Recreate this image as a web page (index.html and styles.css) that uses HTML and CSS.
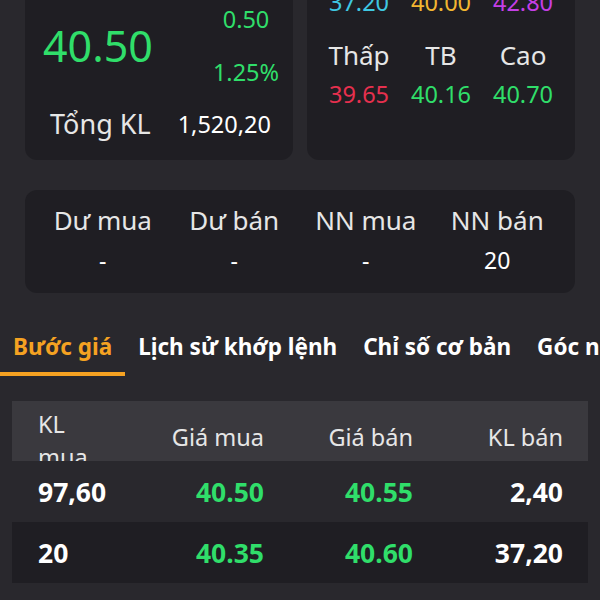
FILE: index.html
```html
<!DOCTYPE html>
<html lang="vi">
<head>
    <meta charset="UTF-8">
    <meta name="viewport" content="width=device-width, initial-scale=1.0">
    <title>Chi tiết cổ phiếu</title>
    <link rel="stylesheet" href="styles.css">
</head>
<body>
    <div class="summary">
        <section class="card quote-card">
            <div class="stock-head">
                <span class="stock-code">GEX</span>
                <span class="stock-ex">HOSE</span>
            </div>
            <div class="quote">
                <div class="price up">40.50</div>
                <div class="change up">
                    <span>0.50</span>
                    <span>1.25%</span>
                </div>
            </div>
            <div class="total">
                <span class="total-label">Tổng KL</span>
                <span class="total-value">1,520,20</span>
            </div>
        </section>

        <section class="card range-card">
            <div class="range-group">
                <span class="range-label">Sàn</span>
                <span class="range-label">TC</span>
                <span class="range-label">Trần</span>
                <span class="range-value floor">37.20</span>
                <span class="range-value ref">40.00</span>
                <span class="range-value ceil">42.80</span>
            </div>
            <div class="range-group">
                <span class="range-label">Thấp</span>
                <span class="range-label">TB</span>
                <span class="range-label">Cao</span>
                <span class="range-value down">39.65</span>
                <span class="range-value up">40.16</span>
                <span class="range-value up">40.70</span>
            </div>
        </section>
    </div>

    <section class="card foreign">
        <span class="foreign-label">Dư mua</span>
        <span class="foreign-label">Dư bán</span>
        <span class="foreign-label">NN mua</span>
        <span class="foreign-label">NN bán</span>
        <span class="foreign-value">-</span>
        <span class="foreign-value">-</span>
        <span class="foreign-value">-</span>
        <span class="foreign-value">20</span>
    </section>

    <nav class="tabs">
        <a href="#" class="tab active">Bước giá</a>
        <a href="#" class="tab">Lịch sử khớp lệnh</a>
        <a href="#" class="tab">Chỉ số cơ bản</a>
        <a href="#" class="tab">Góc nhìn chuyên gia</a>
    </nav>

    <div class="book">
        <div class="book-head">
            <span class="col-first"><span class="wrap">KL mua</span></span>
            <span>Giá mua</span>
            <span>Giá bán</span>
            <span>KL bán</span>
        </div>
        <div class="book-row">
            <span>97,60</span>
            <span class="up">40.50</span>
            <span class="up">40.55</span>
            <span>2,40</span>
        </div>
        <div class="book-row">
            <span>20</span>
            <span class="up">40.35</span>
            <span class="up">40.60</span>
            <span>37,20</span>
        </div>
    </div>
</body>
</html>
```

FILE: styles.css
```css
body {
    margin: 0;
    background: #29282d;
    color: #e6e6e6;
    font-family: 'Noto Sans', 'Open Sans', sans-serif;
    overflow: hidden;
}

.up { color: #30de6a; }
.down { color: #e6304e; }
.floor { color: #3fc8e2; }
.ref { color: #f2b631; }
.ceil { color: #c43fe6; }

.card {
    background: #1f1e23;
    border-radius: 12px;
}

.summary {
    display: grid;
    grid-template-columns: 1fr 1fr;
    gap: 14px;
    padding: 0 25px;
    margin-top: -75px;
}

/* giá hiện tại */
.quote-card {
    padding: 14px 12px 18px 18px;
}

.stock-head {
    display: flex;
    align-items: center;
    gap: 10px;
    height: 40px;
    margin-bottom: 25px;
}

.stock-code { font-size: 24px; font-weight: bold; color: #fff; }
.stock-ex { font-size: 16px; color: #999; }

.quote {
    display: grid;
    grid-template-columns: 1fr 70px;
    align-items: center;
}

.price {
    font-size: 43px;
    line-height: 1;
}

.change {
    display: flex;
    flex-direction: column;
    gap: 23px;
    align-items: center;
    font-size: 23.5px;
    line-height: 30px;
}

.total {
    display: flex;
    gap: 27px;
    margin-top: 19px;
    padding-left: 7px;
    line-height: 36px;
}

.total-label { font-size: 27px; }
.total-value { font-size: 23.5px; color: #fff; }

/* biên độ giá */
.range-card {
    padding: 22px 11px;
    display: flex;
    flex-direction: column;
    gap: 23px;
}

.range-group {
    display: grid;
    grid-template-columns: repeat(3, 1fr);
    row-gap: 9px;
    text-align: center;
}

.range-label { font-size: 26px; line-height: 32px; }
.range-value { font-size: 23.5px; line-height: 28px; }

/* nước ngoài */
.foreign {
    margin: 30px 25px 0;
    padding: 13px 12px 18px;
    display: grid;
    grid-template-columns: repeat(4, 1fr);
    row-gap: 8px;
    text-align: center;
}

.foreign-label { font-size: 26px; line-height: 34px; }
.foreign-value { font-size: 23px; line-height: 30px; color: #fff; }

/* tab */
.tabs {
    display: flex;
    margin-top: 27px;
    overflow: hidden;
    white-space: nowrap;
}

.tab {
    padding: 12px 13px 10px;
    border-bottom: 4px solid transparent;
    font-size: 22.5px;
    font-weight: bold;
    line-height: 30px;
    color: #fff;
    text-decoration: none;
}

.tab.active {
    color: #f5a222;
    border-bottom-color: #f5a222;
}

/* bước giá */
.book {
    margin: 25px 12px 0;
}

.book-head,
.book-row {
    display: grid;
    grid-template-columns: 76px 150px 149px 1fr;
    padding: 0 25px 0 26px;
    align-items: center;
    text-align: right;
}

.book-head > span:first-child,
.book-row > span:first-child {
    text-align: left;
}

.book-head {
    height: 60px;
    overflow: hidden;
    background: #3a393e;
    font-size: 23.5px;
    line-height: 33px;
}

.book-head .col-first {
    align-self: start;
    padding-top: 7px;
}

.wrap {
    display: inline-block;
    max-width: 60px;
}

.book-row {
    height: 61px;
    font-size: 26.5px;
    font-weight: bold;
    color: #fff;
}

.book-row .up { color: #30de6a; }

.book-row:nth-child(odd) {
    background: #1f1e23;
}
```
